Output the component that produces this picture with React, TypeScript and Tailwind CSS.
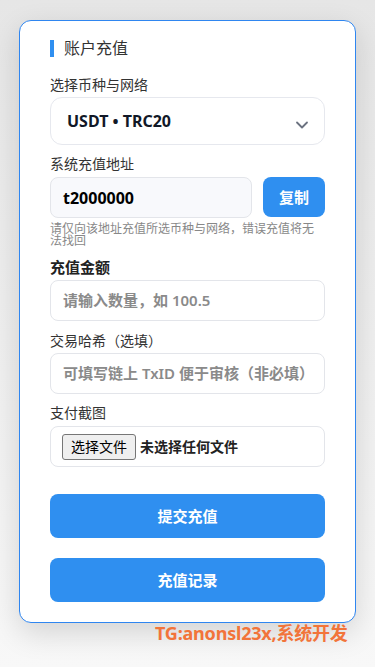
import { ChevronDown } from "lucide-react";

const FONT = { fontFamily: '"Noto Sans", "Noto Sans CJK SC", sans-serif' };

export default function App() {
  return (
    <div
      className="relative min-h-[667px] w-full bg-gradient-to-b from-[#e6e6e6] to-[#f8f8f8] pt-5 text-[#333]"
      style={FONT}
    >
      <div className="mx-[19px] rounded-xl border border-[#2f86f0] bg-white px-[30px] pb-5 pt-[15px] shadow-[0_10px_30px_rgba(0,0,0,0.14)]">
        {/* Title */}
        <div className="flex h-6 items-center">
          <span className="h-[17px] w-1 bg-[#2f8ff0]" />
          <span className="ml-[10px] text-[16px] leading-6 text-[#333]">账户充值</span>
        </div>

        {/* Coin / network */}
        <div className="mt-[15px] text-[14px] leading-5">选择币种与网络</div>
        <div className="mt-[2px] flex h-12 items-center justify-between rounded-xl border border-[#e6e8ee] pl-4 pr-3">
          <span className="text-[16px] font-bold text-[#111827]">USDT • TRC20</span>
          <ChevronDown className="mt-2 h-5 w-5 text-[#6b7280]" strokeWidth={2.2} />
        </div>

        {/* Address */}
        <div className="mt-[9px] text-[14px] leading-5">系统充值地址</div>
        <div className="mt-[3px] flex gap-[11px]">
          <div className="flex h-[41px] flex-1 items-center rounded-lg border border-[#e3e5ea] bg-[#f8f9fc] pl-3 text-[16px] font-bold text-black">
            t2000000
          </div>
          <button className="h-[40px] w-[62px] rounded-lg bg-[#2f8ff0] text-[15px] font-bold text-white">
            复制
          </button>
        </div>
        <p className="mt-[5px] text-[12px] leading-[12px] text-[#888]">
          请仅向该地址充值所选币种与网络，错误充值将无法找回
        </p>

        {/* Amount */}
        <div className="mt-[10px] text-[15px] font-bold leading-5 text-[#222]">充值金额</div>
        <div className="mt-[3px] flex h-[41px] items-center rounded-lg border border-[#e3e5ea] pl-3 text-[15px] font-semibold text-[#8a8a8a]">
          请输入数量，如 100.5
        </div>

        {/* Tx hash */}
        <div className="mt-[10px] text-[14px] leading-5">交易哈希（选填）</div>
        <div className="mt-[2px] flex h-[41px] items-center rounded-lg border border-[#e3e5ea] pl-3 text-[15px] font-semibold text-[#8a8a8a]">
          可填写链上 TxID 便于审核（非必填）
        </div>

        {/* Screenshot */}
        <div className="mt-[9px] text-[14px] leading-5">支付截图</div>
        <div className="mt-[3px] flex h-[41px] items-center rounded-lg border border-[#e3e5ea] pl-[11px]">
          <span className="flex h-[26px] items-center rounded-[3px] border border-[#767676] bg-[#efefef] px-2 text-[14px] text-black">
            选择文件
          </span>
          <span className="ml-1 text-[14px] font-semibold text-[#222]">未选择任何文件</span>
        </div>

        <button className="mt-[27px] h-11 w-full rounded-lg bg-[#2f8ff0] text-[15px] font-bold text-white">
          提交充值
        </button>
        <button className="mt-5 h-11 w-full rounded-lg bg-[#2f8ff0] text-[15px] font-bold text-white">
          充值记录
        </button>
      </div>

      <div className="absolute left-[155px] top-[620px] text-[18px] font-bold tracking-[-0.2px] text-[#f2743a]">
        TG:anonsl23x,系统开发
      </div>
    </div>
  );
}
